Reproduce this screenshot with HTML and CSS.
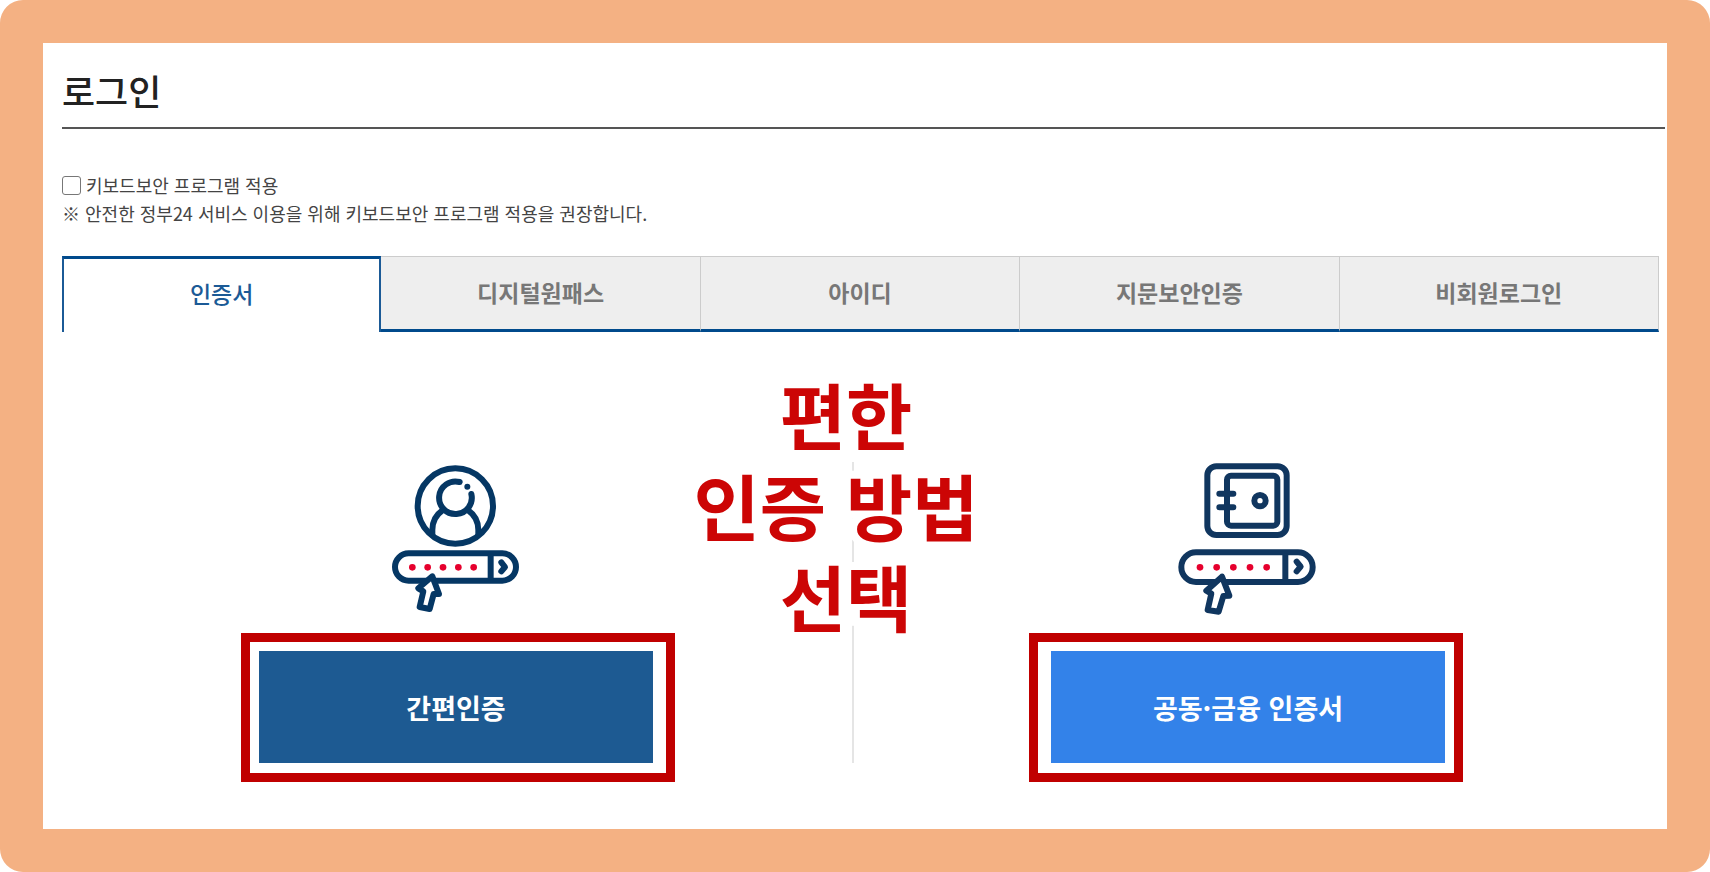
FILE: index.html
```html
<!DOCTYPE html>
<html lang="ko">
<head>
    <meta charset="UTF-8">
    <meta name="viewport" content="width=device-width, initial-scale=1.0">
    <title>로그인</title>
    <link rel="stylesheet" href="styles.css">
</head>
<body>
    <main class="frame">
        <h1>로그인</h1>

        <div class="security">
            <label class="check" for="keyboard-security">
                <input type="checkbox" id="keyboard-security">
                <span>키보드보안 프로그램 적용</span>
            </label>
            <p>※ 안전한 정부24 서비스 이용을 위해 키보드보안 프로그램 적용을 권장합니다.</p>
        </div>

        <nav class="tabs">
            <button type="button" class="tab active">인증서</button>
            <button type="button" class="tab">디지털원패스</button>
            <button type="button" class="tab">아이디</button>
            <button type="button" class="tab">지문보안인증</button>
            <button type="button" class="tab">비회원로그인</button>
        </nav>

        <section class="methods">
            <div class="method">
                <!-- 간편인증 아이콘 -->
                <svg class="icon icon-simple" viewBox="10 0 450 540" aria-hidden="true">
                    <g fill="none" stroke="#053764" stroke-width="18" stroke-linecap="round" stroke-linejoin="round">
                        <circle cx="227" cy="168" r="113"/>
                        <path d="M240 96 A49 49 0 1 0 275 132"/>
                        <path d="M158 254 V240 Q158 202 187 182 M267 182 Q296 202 296 240 V254"/>
                        <rect x="46" y="310" width="363" height="82" rx="41"/>
                        <path d="M333 314 V388" stroke-linecap="butt"/>
                        <path d="M365 337 L376 351 L365 364"/>
                    </g>
                    <circle cx="263" cy="110" r="9" fill="#053764"/>
                    <g fill="#e6002d">
                        <circle cx="98" cy="352" r="10"/>
                        <circle cx="144" cy="352" r="10"/>
                        <circle cx="190" cy="352" r="10"/>
                        <circle cx="236" cy="352" r="10"/>
                        <circle cx="282" cy="352" r="10"/>
                    </g>
                    <path d="M158 379 L116 415 L131 424 L120 471 L150 477 L162 432 L178 432 Z" fill="#fff" stroke="#053764" stroke-width="18" stroke-linejoin="round"/>
                </svg>
                <div class="highlight">
                    <button type="button" class="btn btn-simple">간편인증</button>
                </div>
            </div>

            <div class="method">
                <!-- 공동·금융 인증서 아이콘 -->
                <svg class="icon icon-cert" viewBox="-9 0 510 540" aria-hidden="true">
                    <g fill="none" stroke="#10365f" stroke-width="18" stroke-linecap="round" stroke-linejoin="round">
                        <rect x="130" y="49" width="238" height="206" rx="27"/>
                        <rect x="189" y="77" width="151" height="150" rx="12"/>
                        <path d="M166 131 H208 M166 172 H208"/>
                        <circle cx="288" cy="152" r="17"/>
                        <rect x="52" y="307" width="394" height="89" rx="44"/>
                        <path d="M364 311 V392" stroke-linecap="butt"/>
                        <path d="M398 335 L410 350 L398 364"/>
                    </g>
                    <g fill="#e6002d">
                        <circle cx="108" cy="352" r="10"/>
                        <circle cx="158" cy="352" r="10"/>
                        <circle cx="208" cy="352" r="10"/>
                        <circle cx="258" cy="352" r="10"/>
                        <circle cx="308" cy="352" r="10"/>
                    </g>
                    <path d="M174 380 L127 422 L142 431 L131 480 L164 485 L178 438 L196 437 Z" fill="#fff" stroke="#10365f" stroke-width="18" stroke-linejoin="round"/>
                </svg>
                <div class="highlight highlight-cert">
                    <button type="button" class="btn btn-cert">공동·금융 인증서</button>
                </div>
            </div>

            <p class="notice">편한<br>인증 방법&nbsp;<br>선택</p>
        </section>
    </main>
</body>
</html>
```
FILE: styles.css
```css
* {
    margin: 0;
    padding: 0;
    box-sizing: border-box;
}

body {
    font-family: 'Noto Sans CJK KR', sans-serif;
    background: #fff;
    color: #444;
}

.frame {
    min-height: 100vh;
    border: 43px solid #f4b183;
    border-radius: 23px;
    padding: 18px 2px 46px 19px;
}

h1 {
    height: 68px;
    border-bottom: 2px solid #555;
    color: #222;
    font-size: 36px;
    font-weight: 500;
    line-height: 58px;
}

.security {
    margin-top: 42px;
    font-size: 18px;
    line-height: 28px;
}

.check {
    display: flex;
    align-items: center;
    gap: 5px;
}

.check input {
    appearance: none;
    width: 19px;
    height: 19px;
    border: 1px solid #777;
    border-radius: 3px;
    background: #fff;
}

.tabs {
    display: grid;
    grid-template-columns: repeat(5, 1fr);
    margin: 29px 6px 0 0;
}

.tab {
    height: 76px;
    padding-bottom: 2px;
    border: 1px solid #ccc;
    border-left-width: 0;
    border-bottom: 3px solid #004a8c;
    background: #eee;
    color: #777;
    font-family: inherit;
    font-size: 23px;
    font-weight: 700;
    cursor: pointer;
}

.tab.active {
    padding-bottom: 6px;
    border: 2px solid #1b5a96;
    border-top: 3px solid #004a8c;
    border-bottom: none;
    background: #fff;
    color: #1b5a96;
    font-weight: 500;
}

.methods {
    position: relative;
    display: grid;
    grid-template-columns: 1fr 1fr;
    margin: 0 25px 0 2px;
    padding-top: 118px;
}

/* 가운데 구분선 */
.methods::before {
    content: '';
    position: absolute;
    top: 130px;
    bottom: 19px;
    left: 50%;
    width: 2px;
    background: #e5e5e5;
}

.method {
    display: flex;
    flex-direction: column;
    align-items: center;
    gap: 3px;
}

.icon {
    height: 180px;
}

.icon-simple {
    width: 150px;
}

.icon-cert {
    width: 170px;
}

.highlight {
    width: 434px;
    max-width: 100%;
    border: 9px solid #c00000;
    padding: 9px 13px 10px 9px;
}

.highlight-cert {
    padding: 9px 9px 10px 13px;
}

.btn {
    display: block;
    width: 100%;
    height: 112px;
    border: none;
    color: #fff;
    font-family: inherit;
    font-size: 27px;
    font-weight: 700;
    cursor: pointer;
}

.btn-simple {
    background: #1d5a92;
}

.btn-cert {
    background: #3382e9;
}

.notice {
    position: absolute;
    top: 42px;
    left: 0;
    right: 12px;
    color: #cc0505;
    font-family: 'Liberation Sans', 'Noto Sans CJK KR', sans-serif;
    font-size: 72px;
    font-weight: 700;
    line-height: 91px;
    text-align: center;
    pointer-events: none;
    -webkit-text-stroke: 16px #fff;
    paint-order: stroke fill;
}
```
